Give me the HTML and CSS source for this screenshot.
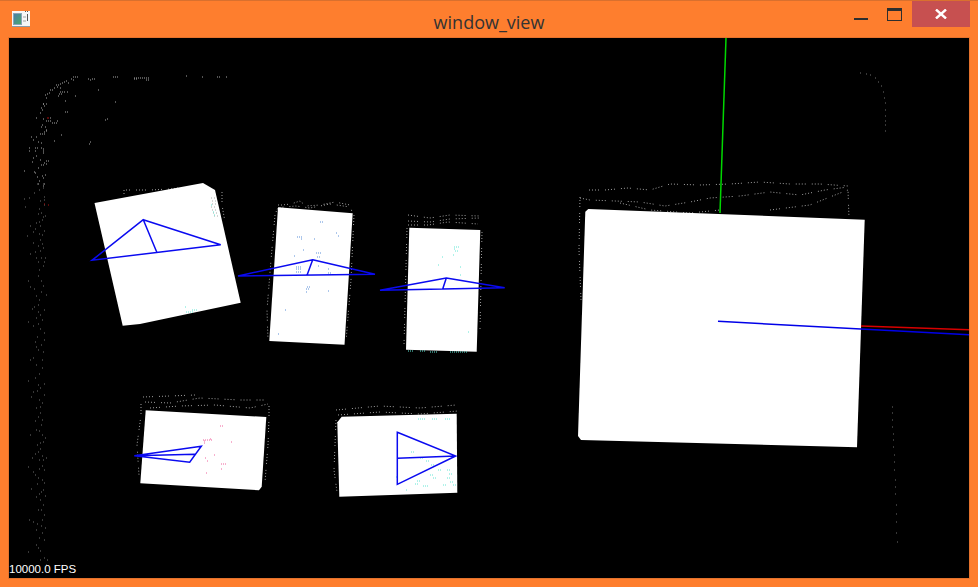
FILE: index.html
```html
<!DOCTYPE html>
<html lang="en">
<head>
<meta charset="utf-8">
<title>window_view</title>
<link rel="stylesheet" href="styles.css">
</head>
<body>
<div class="window">
  <header class="titlebar">
    <svg class="app-icon" viewBox="0 0 18 16" width="18" height="16" aria-hidden="true">
      <defs><linearGradient id="ic" x1="0" y1="0" x2="1" y2="1"><stop offset="0" stop-color="#4a7fa8"/><stop offset="1" stop-color="#4ca86a"/></linearGradient></defs>
      <rect x="0" y="0" width="18" height="15" fill="#f6f6f6"/>
      <rect x="0" y="15" width="18" height="1" fill="#8a9aa8"/>
      <rect x="1" y="2" width="9" height="12" fill="#8aa4b8"/>
      <rect x="2" y="3" width="7" height="10" fill="url(#ic)"/>
      <rect x="11" y="5" width="3" height="2" fill="#ccc"/>
      <rect x="11" y="9" width="3" height="2" fill="#ccc"/>
      <rect x="15" y="3" width="1" height="7" fill="#555"/>
      <rect x="13" y="0" width="1" height="1" fill="#555"/>
      <rect x="15" y="0" width="1" height="1" fill="#555"/>
    </svg>
    <h1 class="title">window_view</h1>
    <div class="controls">
      <span class="btn btn-min"><i class="min-bar"></i></span>
      <span class="btn btn-max"><i class="max-box"></i></span>
      <span class="btn btn-close">
        <svg viewBox="0 0 12 10" width="12" height="10" aria-hidden="true"><path d="M1 0.5 L11 9.5 M11 0.5 L1 9.5" stroke="#fff" stroke-width="2.4" fill="none"/></svg>
      </span>
    </div>
  </header>
  <main class="viewport">
    <svg class="scene" viewBox="9 38 960 540" width="960" height="540">
      <!-- point cloud: room outline -->
      <g class="pts pts-bright">
        <path d="M73 77h1M75 77h1M77 77h1M71 79h1M73 80h1M113 77h1M115 77h1M117 77h1M134 79h1M136 79h1M134 78h1M136 78h1M138 78h1M140 78h1M142 78h1M144 78h1M146 78h1M148 78h1M146 80h1M148 80h1M186 76h1M202 77h1M217 77h1M219 77h1M226 77h1"/>
        <path d="M88 79h1M90 80h1M92 79h1M94 79h1M62 83h1M64 82h1M66 81h1M68 83h1M58 85h1M60 84h1M56 85h1M54 88h1M60 88h1M57 87h1M50 90h1M52 90h1M47 94h1M49 93h1M45 95h1M46 98h1M60 92h1M62 92h1M64 92h1M67 92h1M59 94h1M61 94h1M58 96h1M46 104h1M44 106h1M41 108h1M43 104h1"/>
        <path d="M65 101h1M75 96h1M98 90h1M115 102h1M107 119h1M105 120h1M90 142h1M89 144h1M54 141h1M61 135h1M65 112h1M67 112h1M52 123h1M54 123h1M56 123h1M46 121h1M48 121h1M50 121h1M57 121h1M50 118h1"/>
        <path d="M43 104h1M42 110h1M40 113h1M36 118h1M43 119h1M42 125h1M41 127h1M45 127h1M46 130h1M44 132h1M40 134h1M42 134h1M44 134h1M46 131h1M36 137h1M31 137h1M33 140h1M38 142h1M41 143h1M29 148h1M35 148h1M37 148h1M41 148h1M43 149h1M29 151h1M35 151h1M43 151h1M43 153h1M36 156h1M33 158h1M40 160h1M46 161h1M44 163h1M32 162h1M48 161h1M41 165h1M43 165h1M46 164h1M38 168h1M24 171h1M34 172h1M35 173h1M45 175h1M42 176h1M37 177h1M43 178h1M39 181h1M38 184h1M44 184h1M43 186h1"/>
      </g>
      <g class="pts pts-plain">
        <path d="M37 184h1M43 188h1M39 190h1M29 198h1M34 193h1M44 197h1M40 201h1M24 199h1M25 207h1M44 205h1M38 214h1M43 217h1M42 220h1M36 223h1M40 226h1M30 226h1M33 232h1M44 231h1M39 234h1M42 235h1M27 236h1M40 240h1M33 243h1M38 246h1M35 252h1M30 254h1M41 258h1M45 258h1M38 262h1M43 266h1M39 270h1M28 281h1M30 287h1M41 292h1M36 296h1M39 300h1M34 307h1M32 309h1M38 312h1M40 315h1M28 322h1M33 326h1M40 329h1M44 333h1M37 337h1M35 342h1M41 345h1M38 350h1M43 352h1M30 360h1M33 358h1M36 365h1M42 368h1M39 374h1M35 378h1M28 381h1M44 384h1M40 388h1M37 391h1M33 392h1M31 397h1M39 400h1M42 403h1M36 408h1M40 413h1M38 417h1M35 421h1M41 425h1M39 431h1M30 435h1M43 442h1M37 445h1M40 449h1M35 454h1M42 456h1M46 458h1M43 460h1M32 458h1M28 467h1M39 460h1M33 472h1M35 475h1M38 478h1M42 480h1M44 483h1M31 489h1M41 492h1M36 497h1M40 500h1M43 505h1M38 510h1M29 520h1M33 522h1M37 524h1M41 526h1M45 528h1M42 533h1M39 538h1M36 545h1M40 551h1M44 558h1M28 552h1M47 560h1M46 565h1M40 560h1"/>
        <path d="M43 184h1M44 200h1M39 209h1M41 213h1M45 216h1M39 222h1M35 229h1M42 244h1M43 248h1M40 251h1M36 258h1M44 262h1M38 276h1M41 281h1M43 286h1M34 289h1M46 295h1M38 305h1M44 310h1M36 318h1M42 320h1M38 324h1M44 340h1M36 347h1M42 360h1M38 385h1M44 395h1M40 407h1M42 420h1M36 430h1M42 435h1M45 438h1M40 443h1M38 452h1M42 466h1M39 469h1M44 470h1M37 484h1M43 490h1M45 496h1M39 494h1M41 510h1M44 515h1M42 520h1M36 530h1M44 540h1M38 548h1"/>
        <path d="M860 73h1M866 74h1M870 75h1M875 78h1M878 82h1M881 86h1M883 92h1M884 98h1M885 103h1M885 110h1M885 116h1M885 121h1M885 125h1M885 131h1"/>
        <path d="M892 407h1M892 413h1M892 420h1M892 427h1M893 434h1M893 440h1M893 447h1M894 455h1M894 462h1M894 470h1M895 480h1M895 487h1M895 494h1M896 505h1M896 514h1M896 522h1M896 533h1M897 542h1"/>
      </g>
      <g class="pts-red">
        <path d="M47 118h2M48 205h1M44 204h1"/>
      </g>
      <g class="pts pts-tight">
        <path d="M124 194 L124 190 L135 190 L150 190 L170 189 L178 188 L192 187 L199 186"/>
        <path d="M212 197 L216 205 L220 225"/>
        <path d="M222 192 L222 205 L225 222"/>
        <path d="M278 205 L282 205 L291 204 L300 201 L306 206 L320 205 L335 202 L350 205 L352 212"/>
        <path d="M276 212 L278 208 L284 207 L296 206 L310 208 L330 204 L350 207"/>
        <path d="M275 215 L271 260 L267 310 L268 340"/>
        <path d="M354 215 L351 280 L346 342"/>
        <path d="M408 215 L430 218 L450 215 L480 216 M408 221 L430 222 L450 219 L480 218 M408 225 L428 225 L448 222 L478 224"/>
        <path d="M407 228 L404 345"/>
        <path d="M482 232 L480 330"/>
        <path d="M143 397 L170 396 L195 395 M145 402 L170 403 L200 398 L240 400 L265 400 M150 408 L180 406 L215 405 L250 408 L268 404"/>
        <path d="M141 404 L141 415 L137 445 L139 475"/>
        <path d="M269 406 L269 418 L268 445 L265 482"/>
        <path d="M336 410 L380 406 L420 408 L456 405 M338 415 L380 412 L420 414 L458 411"/>
        <path d="M336 420 L334 470 L337 492"/>
        <path d="M589 190 L605 190 L628 188 L650 190 L670 184 L700 185 L730 184 L760 182 L790 184 L820 184 L848 186"/>
        <path d="M580 198 L590 200 L615 201 L640 202 L665 206 L690 202 L710 198 L740 196 L770 192 L800 195 L825 190 L848 187"/>
        <path d="M620 203 L650 210 L690 213 L720 210 M770 210 L810 205 L835 195 L848 190 L849 218"/>
        <path d="M580 197 L579 250 L581 300"/>
      </g>

      <!-- planes -->
      <g class="planes">
        <polygon points="94.5,203 203,183 215,190 240.7,302.7 140,324 122.7,325.7"/>
        <polygon points="278,207.3 352.7,213.3 344.5,344.7 269.3,341"/>
        <polygon points="409.3,227.7 480.3,230 476.7,351.7 406,349.7"/>
        <polygon points="145.7,410.3 266.3,417 261.7,486.7 259,490.3 140.3,483.3"/>
        <polygon points="341.7,416.7 456.7,413.7 457.3,492.7 339.3,496.7 337.3,422.3"/>
        <polygon points="588.3,209 864.7,219.7 857,447.3 581,440 578,436 585.3,211.7"/>
      </g>

      <!-- speckle on planes -->
      <g class="pts speck-grey">
        <path d="M211 198 h5 M212 201 h5 M212 204 h4 M211 207 h6 M212 210 h5 M213 213 h5 M214 216 h5"/>
      </g>
      <g class="pts speck-cyan">
        <path d="M211 205 h1 M213 212 h1 M214 215 h1"/>
        <path d="M186 312 h8 M192 310 h6 M185 307 h2"/>
        <path d="M454 247 h5 M455 251 h3 M454 249 h1 M453 255 h1 M442 257 h1 M438 265 h1 M460 267 h1 M460 275 h1 M468 332 h2"/>
        <path d="M408 351 h6 M420 351 h6 M430 352 h8 M450 352 h12 M462 352 h6"/>
        <path d="M417 481 h3 M415 484 h3 M423 486 h5 M430 475 h3 M433 478 h3 M438 470 h3 M447 470 h3 M449 474 h4 M447 478 h4 M450 482 h4 M453 485 h3 M420 458 h3 M426 461 h3 M431 465 h3 M443 485 h3 M396 477 h1 M406 490 h1 M411 452 h3"/>
        <path d="M418 419 h8 M432 419 h6 M445 419 h6"/>
      </g>
      <g class="pts speck-blue">
        <path d="M320 222 h3 M297 237 h5 M301 239 h1 M314 239 h1 M336 233 h2 M338 236 h1 M303 250 h2 M316 253 h5 M317 257 h4 M294 256 h1 M296 267 h6 M296 269 h6 M296 272 h6 M318 266 h1 M307 287 h3 M306 289 h3 M306 292 h2 M328 291 h1 M285 310 h1 M278 334 h2 M328 269 h1 M328 273 h3"/>
      </g>
      <g class="pts speck-pink">
        <path d="M220 426 h3 M210 439 h1 M203 440 h5 M209 440 h3 M204 441 h1 M231 442 h1 M204 443 h1 M214 455 h1 M205 458 h1 M223 464 h3 M207 461 h1 M206 473 h1 M221 464 h1 M221 469 h1"/>
      </g>

      <!-- axes -->
      <line class="axis axis-green" x1="726" y1="38" x2="720" y2="213"/>
      <line class="axis axis-red" x1="861" y1="326" x2="969" y2="329.7"/>
      <line class="axis axis-blue" x1="718" y1="321.3" x2="969" y2="334.7"/>

      <!-- triangles -->
      <g class="tri">
        <path d="M143.3 219.7 L220.7 244.7 L92 260.3 Z M143.3 219.7 L156.7 252"/>
        <path d="M312.7 259.7 L375 274.3 L238 276 Z M312.7 259.7 L307 275.3"/>
        <path d="M446.3 278 L504.7 287.7 L380 290.3 Z M446.3 278 L442.7 289"/>
        <path d="M134.3 455.7 L201.3 446.3 L189.7 462.3 Z M134.3 455.7 L195 454.3"/>
        <path d="M397.3 432.3 L455.7 456 L397.3 484.3 Z M397.3 458.3 L455.7 456"/>
      </g>

      <text class="fps" x="9" y="573">10000.0 FPS</text>
    </svg>
  </main>
</div>
</body>
</html>
```

FILE: styles.css
```css
* { box-sizing: border-box; }
html, body { margin: 0; padding: 0; height: 100%; overflow: hidden; background: #fe7e2e; }

.window {
  width: 978px;
  height: 587px;
  display: flex;
  flex-direction: column;
  background: #fe7e2e;
  border-top: 1px solid #d9702e;
}

.titlebar {
  height: 37px;
  display: grid;
  grid-template-columns: minmax(0, 1fr) auto minmax(0, 1fr);
  align-items: start;
  padding-left: 12px;
}
.app-icon { margin-top: 10px; display: block; }
.title {
  margin: 9px 0 0 -12px;
  font: 400 18px/24px "Open Sans", "Noto Sans", sans-serif;
  color: #333;
  white-space: nowrap;
}
.controls { display: flex; justify-content: flex-end; padding-right: 8px; margin-left: -100px; }
.btn { display: flex; height: 26px; align-items: flex-start; justify-content: center; }
.btn-min { width: 32px; padding-top: 17px; }
.btn-max { width: 35px; padding-top: 7px; }
.btn-close { width: 58px; background: #c75050; align-items: center; }
.min-bar { width: 14px; height: 2px; background: #2e2e2e; display: block; }
.max-box {
  width: 15px;
  height: 13px;
  border: 1px solid #2e2e2e;
  border-top-width: 3px;
  display: block;
}

.viewport {
  width: 960px;
  height: 540px;
  margin-left: 9px;
  background: #000;
  box-shadow: 0 0 0 1px #e4722c;
}
.scene { display: block; }

.pts { fill: none; stroke-width: 1; }
.pts-bright { stroke: #a8a8a8; }
.pts-plain { stroke: #6e6e6e; }
.pts-red { fill: none; stroke: #b01010; stroke-width: 1; }
.pts-tight { stroke: #a0a0a0; stroke-dasharray: 1 2 1 2 1 2 1 6; }
.planes polygon { fill: #fff; }
.speck-grey { stroke: #a8aca8; stroke-dasharray: 1 2; }
.speck-cyan { stroke: #62e6d4; stroke-dasharray: 1 1; }
.speck-blue { stroke: #5b8fd8; stroke-dasharray: 1 1; }
.speck-pink { stroke: #f0609c; stroke-dasharray: 1 1; }

.axis { stroke-width: 1.5; }
.axis-green { stroke: #00d800; }
.axis-red { stroke: #d80000; }
.axis-blue { stroke: #0000e8; }
.tri { fill: none; stroke: #0a0af0; stroke-width: 1.5; stroke-linejoin: miter; }
.fps { fill: #fff; font: 400 11.5px "Liberation Sans", sans-serif; }
```
